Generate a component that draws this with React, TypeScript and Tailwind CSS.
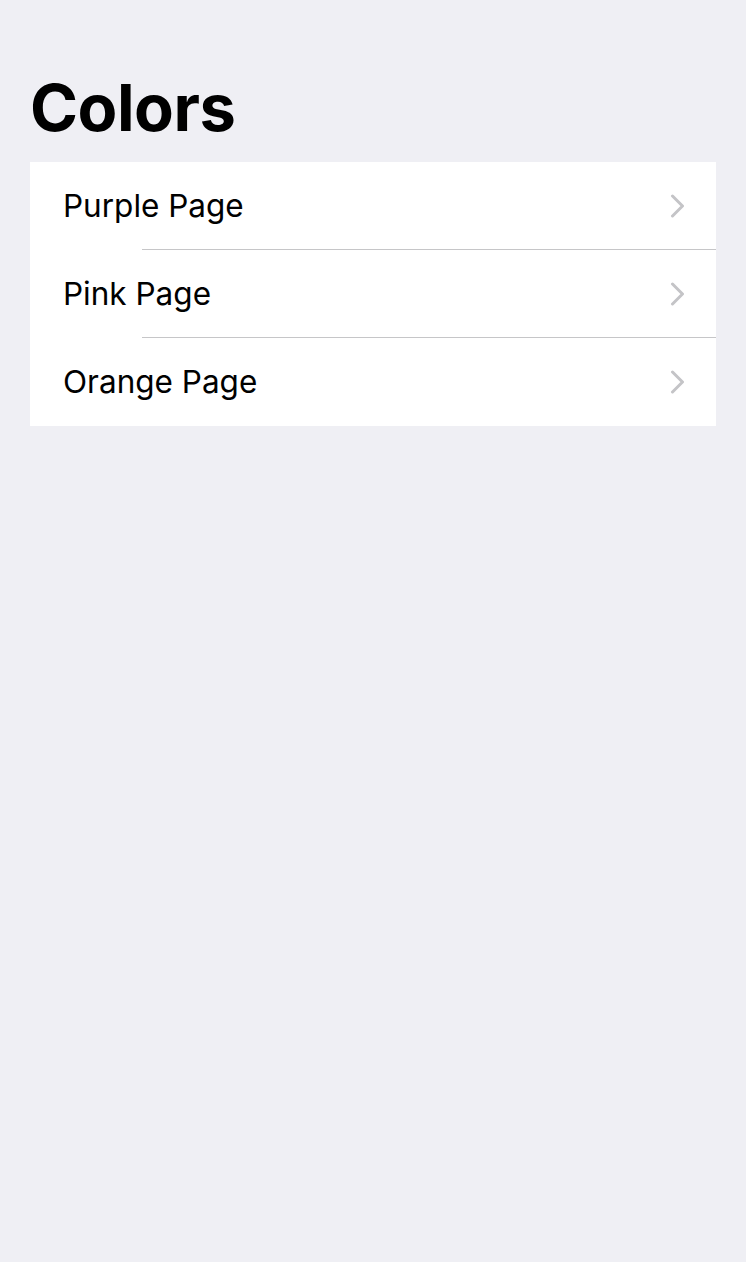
const items = ["Purple Page", "Pink Page", "Orange Page"];

const Chevron = () => (
  <svg width="16" height="24" viewBox="0 0 16 24" fill="none">
    <path
      d="M2.5 2 L12.5 12 L2.5 22"
      stroke="#c4c4c7"
      strokeWidth="3"
      strokeLinecap="round"
      strokeLinejoin="round"
    />
  </svg>
);

export default function App() {
  return (
    <div className="min-h-[1262px] bg-[#efeff4] font-['Inter',sans-serif] text-black">
      <div className="px-[30px] pt-[66px]">
        <h1 className="text-[65px] font-bold leading-[84px] tracking-[-0.5px]">
          Colors
        </h1>
        <ul className="mt-[12px] bg-white">
          {items.map((item, i) => (
            <li key={item} className="flex flex-col">
              {i > 0 && <div className="ml-[112px] h-px bg-[#c6c6c8]" />}
              <div
                className={
                  i === items.length - 1
                    ? "flex h-[88px] items-center justify-between pl-[33px] pr-[30px]"
                    : "flex h-[87px] items-center justify-between pl-[33px] pr-[30px]"
                }
              >
                <span className="text-[31.5px] leading-none">{item}</span>
                <Chevron />
              </div>
            </li>
          ))}
        </ul>
      </div>
    </div>
  );
}
